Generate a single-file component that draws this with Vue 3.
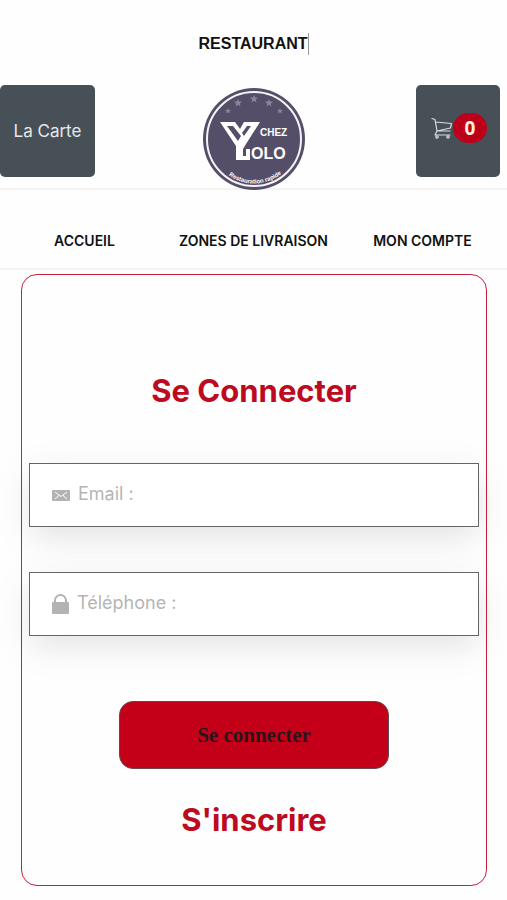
<script setup>
import { ref } from 'vue'

const email = ref('')
const phone = ref('')
const cartCount = ref(0)

const links = ['ACCUEIL', 'ZONES DE LIVRAISON', 'MON COMPTE']
const stars = [
  { x: 26, y: 23, s: 3 },
  { x: 36, y: 15, s: 4 },
  { x: 52, y: 11, s: 4 },
  { x: 67, y: 15, s: 4 },
  { x: 78, y: 23, s: 3 },
]
</script>

<template>
  <div class="page">
    <header class="top">
      <p class="tagline"><span class="typed">RESTAURANT</span></p>
      <div class="brand-row">
        <a class="tile tile-menu" href="#carte">La Carte</a>
        <a class="logo" href="#accueil" aria-label="Chez Yolo">
          <svg viewBox="0 0 104 104" width="104" height="104">
            <defs>
              <path id="motto" d="M20 81 A43 43 0 0 0 86 79" />
            </defs>
            <circle cx="52" cy="51" r="51" fill="#554e68" />
            <circle cx="52" cy="51" r="47" fill="none" stroke="#f5f3f7" stroke-width="2" />
            <polygon
              v-for="star in stars"
              :key="star.x"
              points="0,-1 .28,-.35 1,-.3 .45,.15 .62,.85 0,.45 -.62,.85 -.45,.15 -1,-.3 -.28,-.35"
              fill="#8b859b"
              :transform="`translate(${star.x} ${star.y}) scale(${star.s})`"
            />
            <path
              fill="#fff"
              fill-rule="evenodd"
              d="M18 34 H33 L38 41 L42 34 H58 L44 56 L41 61 V68 H44 V61 H48 V72 H34 V58 Z M25 38 L36 53 L39 48 L31 38 Z M45 38 L40 45 L42 48 L49 38 Z"
            />
            <text class="logo-chez" x="58" y="48">CHEZ</text>
            <text class="logo-olo" x="49" y="71">OLO</text>
            <text class="logo-motto"><textPath href="#motto" startOffset="50%" text-anchor="middle">Restauration rapide</textPath></text>
          </svg>
        </a>
        <a class="tile tile-cart" href="#panier" aria-label="Panier">
          <svg viewBox="0 0 22 22" width="22" height="22" fill="none" stroke="#d9dcde" stroke-width="1.2" stroke-linejoin="round" stroke-linecap="round">
            <path d="M1 1.500 L4 2.500 L6 14 H19 M4.500 5 L20.500 6.500 L19.500 11 L6 14 M6 14 L4 18 H19" />
            <circle cx="6" cy="20" r="1.200" />
            <circle cx="17" cy="20" r="1.200" />
          </svg>
          <span class="badge">{{ cartCount }}</span>
        </a>
      </div>
    </header>

    <nav class="nav">
      <a v-for="link in links" :key="link" href="#">{{ link }}</a>
    </nav>

    <main class="card">
      <h1>Se Connecter</h1>
      <form @submit.prevent>
        <label class="field">
          <svg class="icon" viewBox="0 0 18 18" width="18" height="18">
            <rect x="0" y="4" width="18" height="11" rx="1" fill="#b3b3b3" />
            <path d="M3 6 L9 10.500 L15 6 M3 13 L7 9.500 M15 13 L11 9.500" fill="none" stroke="#fff" stroke-width="1" />
          </svg>
          <input v-model="email" type="email" placeholder="Email :" aria-label="Email" />
        </label>
        <label class="field">
          <svg class="icon" viewBox="0 0 17 20" width="17" height="20">
            <path d="M3 9 V6.500 a5.500 5.500 0 0 1 11 0 V9" fill="none" stroke="#b3b3b3" stroke-width="2" />
            <rect x="0" y="8" width="17" height="12" rx="1" fill="#b3b3b3" />
          </svg>
          <input v-model="phone" type="tel" placeholder="Téléphone :" aria-label="Téléphone" />
        </label>
        <button type="submit">Se connecter</button>
      </form>
      <a class="signup" href="#inscription">S'inscrire</a>
    </main>
  </div>
</template>

<style>
body {
  margin: 0;
  background: #fefefe;
}
</style>

<style scoped>
.page {
  font-family: Inter, "Liberation Sans", sans-serif;
  color: #111;
  overflow-x: hidden;
}

a {
  color: inherit;
  text-decoration: none;
}

.top {
  padding-top: 33px;
  border-bottom: 2px solid #f3f3f3;
}

.tagline {
  margin: 0;
  text-align: center;
  font: bold 16px/22px "Liberation Sans", sans-serif;
}

.typed {
  display: inline-block;
  border-right: 1px solid #999;
}

.brand-row {
  display: grid;
  grid-template-columns: 1fr auto 1fr;
  align-items: start;
  padding: 30px 7px 0 0;
  height: 103px;
}

.tile {
  display: flex;
  align-items: center;
  justify-content: center;
  box-sizing: border-box;
  height: 92px;
  border-radius: 5px;
  background: #475057;
  color: #e6e8e9;
}

.tile-menu {
  width: 95px;
  font-size: 17px;
}

.tile-cart {
  justify-self: end;
  width: 84px;
  padding: 0 0 6px 2px;
}

.badge {
  padding: 0 12px;
  border-radius: 15px;
  background: #bd0019;
  color: #fff0dc;
  font: bold 19px/30px "Noto Sans", sans-serif;
}

.logo {
  display: block;
  height: 104px;
  margin: 3px 0 0 8px;
}

.logo svg {
  display: block;
}

.logo text {
  fill: #fff;
  font-family: "Liberation Sans Narrow", "Liberation Sans", sans-serif;
  font-weight: bold;
}

.logo .logo-chez {
  font-size: 10px;
}

.logo .logo-olo {
  font-size: 16px;
}

.logo .logo-motto {
  font-family: "Liberation Sans", sans-serif;
  font-size: 6px;
}

.nav {
  display: grid;
  grid-template-columns: repeat(3, 1fr);
  padding: 42px 0 18px;
  border-bottom: 2px solid #f3f3f3;
  font-size: 14px;
  font-weight: 600;
  line-height: 18px;
  text-align: center;
}

.card {
  display: flex;
  flex-direction: column;
  align-items: center;
  margin: 4px 20px 14px 21px;
  padding: 96px 7px 45px;
  border: 1px solid #c6213b;
  border-radius: 16px;
}

h1,
.signup {
  margin: 0;
  color: #bd0a20;
  font-size: 31px;
  font-weight: 700;
  line-height: 40px;
}

form {
  display: flex;
  flex-direction: column;
  align-items: center;
  gap: 45px;
  width: 100%;
  margin: 52px 0 31px;
}

.field {
  display: flex;
  align-items: center;
  gap: 8px;
  box-sizing: border-box;
  width: 100%;
  height: 64px;
  padding: 0 22px;
  border: 1px solid #626666;
  background: #fff;
  box-shadow: 0 13px 27px -5px rgba(50, 50, 93, 0.05), 0 10px 40px rgba(0, 0, 0, 0.08);
}

.field input {
  flex: 1;
  min-width: 0;
  padding: 0 0 3px;
  border: 0;
  outline: 0;
  background: none;
  color: #333;
  font: 18px/24px Inter, "Liberation Sans", sans-serif;
}

.field input::placeholder {
  color: #b5b5b5;
  opacity: 1;
}

button {
  width: 60%;
  height: 68px;
  margin-top: 20px;
  border: 1px solid #6a4549;
  border-radius: 14px;
  background: #c40018;
  color: #2b1519;
  font: bold 21px/24px "Liberation Serif", serif;
}
</style>
